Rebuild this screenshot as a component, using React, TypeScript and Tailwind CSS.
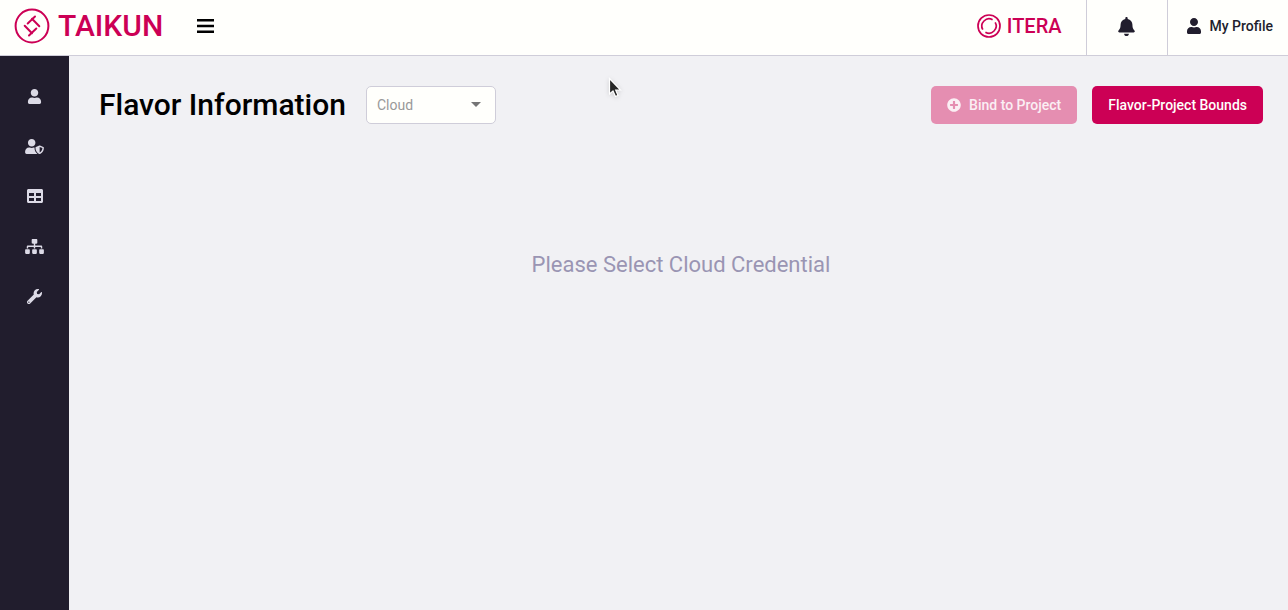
import { FaBell, FaPlusCircle, FaSitemap, FaTable, FaUser, FaUserShield, FaWrench } from "react-icons/fa";
import { MdArrowDropDown } from "react-icons/md";

const navItems = [
  { label: "Users", icon: FaUser, size: "h-[15px] w-[15px]" },
  { label: "Access profiles", icon: FaUserShield, size: "h-[15px] w-[19px]" },
  { label: "Flavors", icon: FaTable, size: "h-4 w-4" },
  { label: "Infrastructure", icon: FaSitemap, size: "h-[15px] w-[19px]" },
  { label: "Settings", icon: FaWrench, size: "h-[15px] w-[15px]" },
];

function TaikunLogo() {
  return (
    <a href="#home" className="flex items-center gap-2 text-[#cc0055]">
      <svg viewBox="0 0 36 36" className="size-9" fill="none" stroke="currentColor" strokeWidth="2" aria-hidden="true">
        <circle cx="18" cy="18" r="16.4" />
        <path d="M21 8.5 13.7 15.5M18 10.8 25.3 18.2" strokeLinecap="round" />
        <path d="M15 27.5 22.3 20.5M18 25.2 10.7 17.8" strokeLinecap="round" />
      </svg>
      <span className="text-[30px] leading-9 font-medium">TAIKUN</span>
    </a>
  );
}

function IteraLogo() {
  return (
    <a href="#itera" className="flex items-center gap-1.5 text-[#cc0055]">
      <svg viewBox="0 0 24 24" className="size-6" fill="none" stroke="currentColor" strokeWidth="1.7" aria-hidden="true">
        <circle cx="12" cy="12" r="11" />
        <path d="M15.6 5.8A7.2 7.2 0 0 0 5.8 15.6" />
        <path d="M8.4 18.2A7.2 7.2 0 0 0 18.2 8.4" />
      </svg>
      <span className="text-xl leading-6 font-medium">ITERA</span>
    </a>
  );
}

function MenuIcon() {
  return (
    <svg viewBox="0 0 17 14" className="h-3.5 w-[17px]" fill="currentColor" aria-hidden="true">
      <path d="M0 0H17V2.4H0ZM0 5.8H17V8.2H0ZM0 11.6H17V14H0Z" />
    </svg>
  );
}

function Header() {
  return (
    <header className="flex h-14 items-stretch justify-between border-b border-[#cfcdd9] bg-[#fffffc]">
      <div className="flex items-center gap-[34px] pb-1 pl-3.5">
        <TaikunLogo />
        <button type="button" aria-label="Toggle menu" className="text-black">
          <MenuIcon />
        </button>
      </div>
      <div className="flex items-stretch">
        <div className="flex items-center pr-6 pb-1">
          <IteraLogo />
        </div>
        <button
          type="button"
          aria-label="Notifications"
          className="flex w-[82px] items-center justify-center border-x border-[#cfcdd9] pb-0.5 text-[#211d2d]"
        >
          <FaBell className="size-[19px]" />
        </button>
        <button type="button" className="flex items-center gap-2 pr-[15px] pb-1 pl-[18px] text-sm font-medium text-[#211d2d]">
          <FaUser className="size-4" />
          My Profile
        </button>
      </div>
    </header>
  );
}

function Sidebar() {
  return (
    <nav aria-label="Main" className="w-[69px] shrink-0 bg-[#211d2d] pt-[15px]">
      <ul>
        {navItems.map(({ label, icon: Icon, size }) => (
          <li key={label}>
            <a href="#section" aria-label={label} className="flex h-[50px] items-center justify-center text-[#dcdae6]">
              <Icon className={size} />
            </a>
          </li>
        ))}
      </ul>
    </nav>
  );
}

function Pointer() {
  return (
    <svg viewBox="0 0 14 22" className="absolute top-[77px] left-[608px] h-[22px] w-3.5 drop-shadow-sm" aria-hidden="true">
      <path d="M1.5 1.5V17L5 14 7.5 19.5 10 18.4 7.7 13H12.5Z" fill="#262626" stroke="#ffffff" strokeWidth="1.2" />
    </svg>
  );
}

export default function App() {
  return (
    <div className="relative flex min-h-screen flex-col bg-[#f1f1f4] font-['Roboto',sans-serif]">
      <Header />
      <div className="flex flex-1">
        <Sidebar />
        <main className="flex-1 pt-[30px] pr-[25px] pl-[30px]">
          <div className="flex items-center justify-between">
            <div className="flex items-center gap-5">
              <h1 className="text-[30px] leading-9 font-medium text-black">Flavor Information</h1>
              <div className="relative">
                <select
                  aria-label="Cloud"
                  defaultValue=""
                  className="h-[38px] w-[130px] appearance-none rounded-[5px] border border-[#cfcdd9] bg-[#fffffc] px-2.5 text-sm text-[#999999]"
                >
                  <option value="">Cloud</option>
                </select>
                <MdArrowDropDown className="pointer-events-none absolute top-1.5 right-2 size-6 text-[#757575]" />
              </div>
            </div>
            <div className="flex gap-[15px]">
              <button
                type="button"
                disabled
                className="flex h-[38px] items-center gap-2 rounded-[5px] bg-[#e58eb1] px-4 text-sm font-medium text-[#fbeff4]"
              >
                <FaPlusCircle className="size-3.5" />
                Bind to Project
              </button>
              <button type="button" className="h-[38px] rounded-[5px] bg-[#cc0055] px-4 text-sm font-medium text-[#fffffc]">
                Flavor-Project Bounds
              </button>
            </div>
          </div>
          <p className="mt-[125px] text-center text-[22px] leading-8 text-[#9a95b3]">Please Select Cloud Credential</p>
        </main>
      </div>
      <Pointer />
    </div>
  );
}
